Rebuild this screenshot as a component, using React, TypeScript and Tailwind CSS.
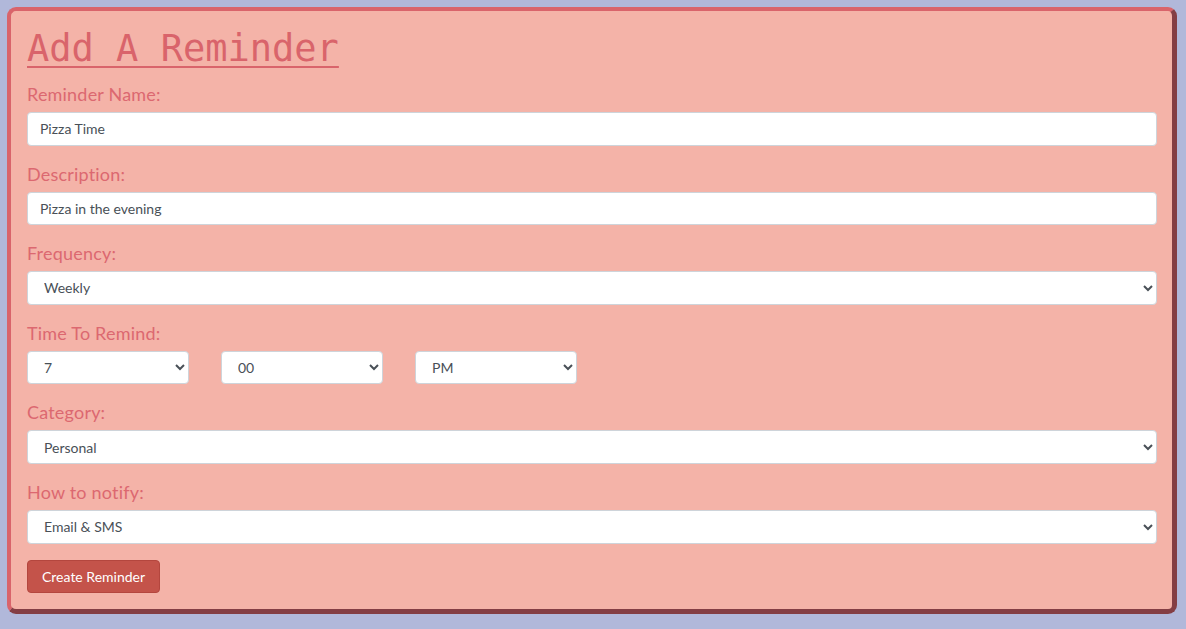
import React, { useState } from 'react';

const labelCls = "block text-[18px] leading-[24px] mb-[6px] text-[#dc6870] tracking-[0.2px]";
const fieldCls = "w-full h-[33.6px] bg-white border border-[#ced4da] rounded-[4px] px-3 text-[14px] text-[#495057] outline-none";

export default function App() {
  const [name, setName] = useState('Pizza Time');
  const [desc, setDesc] = useState('Pizza in the evening');
  const [freq, setFreq] = useState('Weekly');
  const [hour, setHour] = useState('7');
  const [minute, setMinute] = useState('00');
  const [ampm, setAmpm] = useState('PM');
  const [category, setCategory] = useState('Personal');
  const [notify, setNotify] = useState('Email & SMS');

  return (
    <div className="min-h-screen bg-[#b1b8da] pt-[7px] pl-[7px] pr-[9px] pb-4" style={{ fontFamily: 'Lato, "Open Sans", sans-serif' }}>
      <div className="bg-[#f4b3a8] rounded-[9px] border-t-4 border-l-4 border-r-[5px] border-b-[5px] border-t-[#d9646b] border-l-[#d9646b] border-r-[#843e44] border-b-[#843e44] pl-4 pr-[15px] pt-4 pb-4">
        <h1 className="text-[37px] leading-[43px] mb-3 text-[#d9646b] underline decoration-2 underline-offset-[5px]" style={{ fontFamily: '"DejaVu Sans Mono", "Liberation Mono", monospace' }}>
          Add A Reminder
        </h1>

        <div className="mb-4">
          <label className={labelCls}>Reminder Name:</label>
          <input className={fieldCls} value={name} onChange={e => setName(e.target.value)} />
        </div>

        <div className="mb-4">
          <label className={labelCls}>Description:</label>
          <input className={fieldCls} value={desc} onChange={e => setDesc(e.target.value)} />
        </div>

        <div className="mb-4">
          <label className={labelCls}>Frequency:</label>
          <select className={fieldCls} value={freq} onChange={e => setFreq(e.target.value)}>
            <option>Daily</option>
            <option>Weekly</option>
            <option>Monthly</option>
          </select>
        </div>

        <div className="mb-4">
          <label className={labelCls}>Time To Remind:</label>
          <div className="flex gap-8">
            <select className={fieldCls + " !w-[162px]"} value={hour} onChange={e => setHour(e.target.value)}>
              {['1','2','3','4','5','6','7','8','9','10','11','12'].map(h => <option key={h}>{h}</option>)}
            </select>
            <select className={fieldCls + " !w-[162px]"} value={minute} onChange={e => setMinute(e.target.value)}>
              {['00','15','30','45'].map(m => <option key={m}>{m}</option>)}
            </select>
            <select className={fieldCls + " !w-[162px]"} value={ampm} onChange={e => setAmpm(e.target.value)}>
              <option>AM</option>
              <option>PM</option>
            </select>
          </div>
        </div>

        <div className="mb-4">
          <label className={labelCls}>Category:</label>
          <select className={fieldCls} value={category} onChange={e => setCategory(e.target.value)}>
            <option>Personal</option>
            <option>Work</option>
            <option>Other</option>
          </select>
        </div>

        <div className="mb-4">
          <label className={labelCls}>How to notify:</label>
          <select className={fieldCls} value={notify} onChange={e => setNotify(e.target.value)}>
            <option>Email</option>
            <option>SMS</option>
            <option>Email &amp; SMS</option>
          </select>
        </div>

        <button className="h-[33px] px-[14px] bg-[#c4534a] border border-[#b4463e] rounded-[4px] text-white text-[14px]">
          Create Reminder
        </button>
      </div>
    </div>
  );
}
